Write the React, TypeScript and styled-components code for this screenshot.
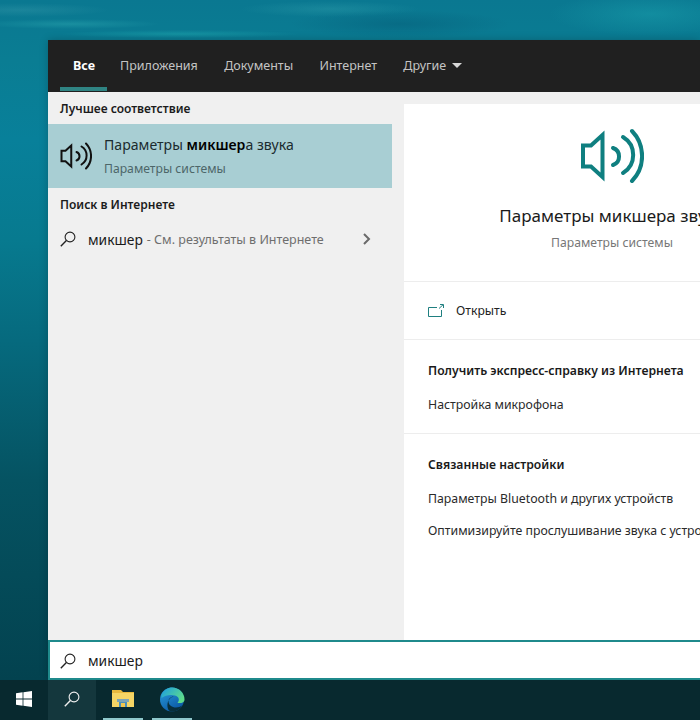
import React from 'react'
import styled, {createGlobalStyle} from 'styled-components'

const GlobalStyle = createGlobalStyle`
  html, body {
    margin: 0;
    padding: 0;
    width: 700px;
    height: 720px;
    overflow: hidden;
    font-family: "Noto Sans", "Open Sans", sans-serif;
  }
  * {
    box-sizing: border-box;
  }
`

const Desktop = styled.div`
  width: 700px;
  height: 720px;
  display: flex;
  flex-direction: column;
  overflow: hidden;
  background:
    radial-gradient(ellipse 90px 5px at 70px 24px, rgba(60, 190, 190, 0.3), transparent),
    radial-gradient(ellipse 120px 4px at 180px 34px, rgba(40, 190, 190, 0.35), transparent),
    radial-gradient(ellipse 90px 7px at 20px 10px, rgba(150, 220, 220, 0.12), transparent),
    radial-gradient(ellipse 110px 14px at 400px 24px, rgba(0, 70, 100, 0.28), transparent),
    radial-gradient(ellipse 90px 8px at 330px 9px, rgba(90, 200, 200, 0.18), transparent),
    radial-gradient(ellipse 100px 22px at 650px 14px, rgba(30, 170, 180, 0.4), transparent),
    linear-gradient(180deg, #0a7891 0, #0a7d93 60px, #08809a 140px, #077a8f 240px, #066a7e 340px, #055362 480px, #03424f 680px);
`

const Main = styled.div`
  flex: 1;
  min-height: 0;
  padding: 40px 0 0 48px;
  display: flex;
`

const SearchWindow = styled.div`
  width: 652px;
  display: flex;
  flex-direction: column;
  box-shadow: 0 0 8px rgba(0, 0, 0, 0.22);
`

const TabBar = styled.div`
  height: 52px;
  flex: none;
  background: #202020;
  display: flex;
  align-items: flex-start;
  padding-left: 12px;
`

const Tab = styled.div<{$active?: boolean}>`
  height: 51px;
  padding: 4px ${p => (p.$active ? '12px' : '13.3px')} 0 13px;
  display: flex;
  align-items: center;
  gap: 6px;
  font-size: 12.5px;
  font-weight: ${p => (p.$active ? 700 : 400)};
  color: ${p => (p.$active ? '#ffffff' : '#c4c4c4')};
  border-bottom: ${p => (p.$active ? '4px solid #2f8483' : '4px solid transparent')};
`

const Caret = styled.span`
  width: 0;
  height: 0;
  border-left: 5px solid transparent;
  border-right: 5px solid transparent;
  border-top: 5px solid #d8d8d8;
`

const Body = styled.div`
  flex: 1;
  min-height: 0;
  display: flex;
  background: #f0f0f0;
`

const LeftColumn = styled.div`
  width: 344px;
  flex: none;
`

const SectionLabel = styled.div`
  height: 32px;
  padding: 8px 0 0 12px;
  font-size: 12px;
  font-weight: 600;
  color: #1c1c1c;
`

const BestMatch = styled.div`
  height: 64px;
  background: #a8ced3;
  display: flex;
  align-items: center;
  padding-left: 12px;
  gap: 12px;
`

const BestMatchText = styled.div`
  display: flex;
  flex-direction: column;
  gap: 7px;
`

const BestMatchTitle = styled.div`
  font-size: 14.1px;
  line-height: 18px;
  color: #1b2b2e;
  b {
    font-weight: 600;
    color: #000;
  }
`

const BestMatchSub = styled.div`
  font-size: 12.2px;
  line-height: 16px;
  color: #4d6669;
`

const WebRow = styled.div`
  height: 38px;
  display: flex;
  align-items: center;
  padding: 0 20px 0 12px;
`

const WebQuery = styled.span`
  margin-left: 12px;
  font-size: 13.8px;
  color: #1a1a1a;
`

const WebHint = styled.span`
  margin-left: 4px;
  font-size: 12.5px;
  color: #6e6e6e;
  flex: 1;
`

const Preview = styled.div`
  flex: 1;
  margin: 12px 0 0 12px;
  background: #ffffff;
  min-width: 0;
  overflow: hidden;
`

const Hero = styled.div`
  width: 416px;
  height: 178px;
  display: flex;
  flex-direction: column;
  align-items: center;
  padding-top: 24px;
  border-bottom: 1px solid #ededed;
`

const HeroTitle = styled.div`
  margin-top: 20px;
  font-size: 17px;
  line-height: 24px;
  color: #1a1a1a;
  white-space: nowrap;
`

const HeroSub = styled.div`
  margin-top: 7px;
  font-size: 12.2px;
  line-height: 16px;
  color: #777777;
`

const OpenRow = styled.div`
  height: 58px;
  padding-left: 24px;
  display: flex;
  align-items: center;
  gap: 12px;
  font-size: 12.2px;
  color: #222;
  border-bottom: 1px solid #ededed;
`

const Section = styled.div<{$border?: boolean}>`
  padding: 22px 0 0 24px;
  height: ${p => (p.$border ? '94px' : 'auto')};
  border-bottom: ${p => (p.$border ? '1px solid #ededed' : 'none')};
`

const SectionHead = styled.div`
  font-size: 12.2px;
  line-height: 18px;
  font-weight: 600;
  color: #1a1a1a;
  margin-bottom: 16px;
`

const LinkRow = styled.div`
  font-size: 12.3px;
  line-height: 18px;
  color: #2a2a2a;
  white-space: nowrap;
  margin-bottom: 14px;
`

const SearchBox = styled.div`
  height: 40px;
  flex: none;
  background: #ffffff;
  border: 2px solid #1f8a8c;
  border-right: none;
  display: flex;
  align-items: center;
  padding: 1px 0 0 10px;
  gap: 12px;
  font-size: 13.8px;
  color: #1a1a1a;
`

const Taskbar = styled.div`
  height: 40px;
  flex: none;
  background: #08292f;
  display: flex;
  align-items: stretch;
`

const TaskButton = styled.div<{$width: number; $search?: boolean; $running?: boolean}>`
  width: ${p => p.$width}px;
  display: flex;
  align-items: center;
  justify-content: center;
  background: ${p => (p.$search ? '#14373d' : 'transparent')};
  border-bottom: ${p => (p.$running ? '2px solid #8fc8cc' : '2px solid transparent')};
`

const Spacer = styled.div<{$width: number}>`
  width: ${p => p.$width}px;
`

const Speaker = ({size, color, sw}: {size: number; color: string; sw: number}) => (
  <svg width={size} height={(size * 56) / 64} viewBox="0 0 64 56" fill="none" stroke={color} strokeWidth={sw}>
    <path d="M3 17.5H11L22.5 7V49L11 38.5H3Z" strokeLinejoin="miter" />
    <path d="M33 20A9 9 0 0 1 33 37" strokeLinecap="round" />
    <path d="M43 9A21 21 0 0 1 43 45" strokeLinecap="round" />
    <path d="M52 3A36 36 0 0 1 52 53" strokeLinecap="round" />
  </svg>
)

const Magnifier = ({color}: {color: string}) => (
  <svg width="16" height="16" viewBox="0 0 16 16" fill="none" stroke={color} strokeWidth="1.1">
    <circle cx="10" cy="6" r="4.9" />
    <path d="M6.4 9.6L0.8 15.2" strokeWidth="1.4" />
  </svg>
)

const Chevron = () => (
  <svg width="10" height="12" viewBox="0 0 10 12" fill="none" stroke="#6a6a6a" strokeWidth="2">
    <path d="M2 1L7 6L2 11" />
  </svg>
)

const OpenIcon = () => (
  <svg width="16" height="14" viewBox="0 0 16 14" fill="none" stroke="#1f7f80" strokeWidth="1">
    <path d="M9 3.5H0.5V12.5H13.5V6" />
    <path d="M11 4.5L15 0.8M12 0.5H15.5V4" />
  </svg>
)

const WindowsLogo = () => (
  <svg width="16" height="16" viewBox="0 0 16 16" fill="#ffffff">
    <path d="M0 2.2L6.6 1.3V7.6H0ZM7.4 1.2L16 0V7.6H7.4ZM0 8.4H6.6V14.7L0 13.8ZM7.4 8.4H16V16L7.4 14.8Z" />
  </svg>
)

const FolderIcon = () => (
  <svg width="24" height="20" viewBox="0 0 24 20">
    <path d="M1 1H10L12 3H23V5H1Z" fill="#e8b93e" />
    <path d="M1 4H23V18H1Z" fill="#f5d565" />
    <path d="M8 12H16V18H8Z" fill="#4b8fb8" />
    <path d="M6 10H18V13H6Z" fill="#7ea4b4" />
    <path d="M10 14H14V18H10Z" fill="#f0c64f" />
  </svg>
)

const EdgeIcon = () => (
  <svg width="25" height="25" viewBox="0 0 25 25">
    <defs>
      <linearGradient id="edgeBlue" x1="0" y1="0" x2="0.6" y2="1">
        <stop offset="0" stopColor="#2a9fe0" />
        <stop offset="1" stopColor="#0c59a4" />
      </linearGradient>
      <linearGradient id="edgeGreen" x1="0" y1="0" x2="1" y2="0.6">
        <stop offset="0" stopColor="#1b9de2" />
        <stop offset="1" stopColor="#5fdc8a" />
      </linearGradient>
    </defs>
    <circle cx="12" cy="12.5" r="12" fill="url(#edgeBlue)" />
    <path d="M1.5 8C4 2.5 8 .5 12 .5C19 .5 24.5 6 24.5 12.5C24.5 15.5 21 16.5 17.5 16C20 13 19 9.5 15 8.5C10 7.2 5 8.5 1.5 11Z" fill="url(#edgeGreen)" />
    <path d="M15 9.5C11 9 8.5 11.5 8.5 14.5C8.5 18 12 20.5 16 20.5C18.5 20.5 20.5 19.5 22 18.5C20 22.5 16.5 24.5 12.5 24.5C11 24.5 9.5 24 9 23.5C7 21 6.5 15 10 11.5C11.5 10 13.5 9.5 15 9.5Z" fill="#08292f" opacity="0.9" />
  </svg>
)

const App: React.FC = () => (
  <Desktop>
    <GlobalStyle />
    <Main>
      <SearchWindow>
        <TabBar>
          <Tab $active>Все</Tab>
          <Tab>Приложения</Tab>
          <Tab>Документы</Tab>
          <Tab>Интернет</Tab>
          <Tab>
            Другие <Caret />
          </Tab>
        </TabBar>
        <Body>
          <LeftColumn>
            <SectionLabel>Лучшее соответствие</SectionLabel>
            <BestMatch>
              <Speaker size={32} color="#111" sw={4} />
              <BestMatchText>
                <BestMatchTitle>
                  Параметры <b>микшер</b>а звука
                </BestMatchTitle>
                <BestMatchSub>Параметры системы</BestMatchSub>
              </BestMatchText>
            </BestMatch>
            <SectionLabel>Поиск в Интернете</SectionLabel>
            <WebRow>
              <Magnifier color="#222" />
              <WebQuery>микшер</WebQuery>
              <WebHint>- См. результаты в Интернете</WebHint>
              <Chevron />
            </WebRow>
          </LeftColumn>
          <Preview>
            <Hero>
              <Speaker size={64} color="#0f7f80" sw={4} />
              <HeroTitle>Параметры микшера звука</HeroTitle>
              <HeroSub>Параметры системы</HeroSub>
            </Hero>
            <OpenRow>
              <OpenIcon />
              Открыть
            </OpenRow>
            <Section $border>
              <SectionHead>Получить экспресс-справку из Интернета</SectionHead>
              <LinkRow>Настройка микрофона</LinkRow>
            </Section>
            <Section>
              <SectionHead>Связанные настройки</SectionHead>
              <LinkRow>Параметры Bluetooth и других устройств</LinkRow>
              <LinkRow>Оптимизируйте прослушивание звука с устройств</LinkRow>
            </Section>
          </Preview>
        </Body>
        <SearchBox>
          <Magnifier color="#222" />
          микшер
        </SearchBox>
      </SearchWindow>
    </Main>
    <Taskbar>
      <TaskButton $width={48}>
        <WindowsLogo />
      </TaskButton>
      <TaskButton $width={48} $search>
        <Magnifier color="#f0f0f0" />
      </TaskButton>
      <Spacer $width={7} />
      <TaskButton $width={40} $running>
        <FolderIcon />
      </TaskButton>
      <Spacer $width={9} />
      <TaskButton $width={40} $running>
        <EdgeIcon />
      </TaskButton>
    </Taskbar>
  </Desktop>
)

export default App
